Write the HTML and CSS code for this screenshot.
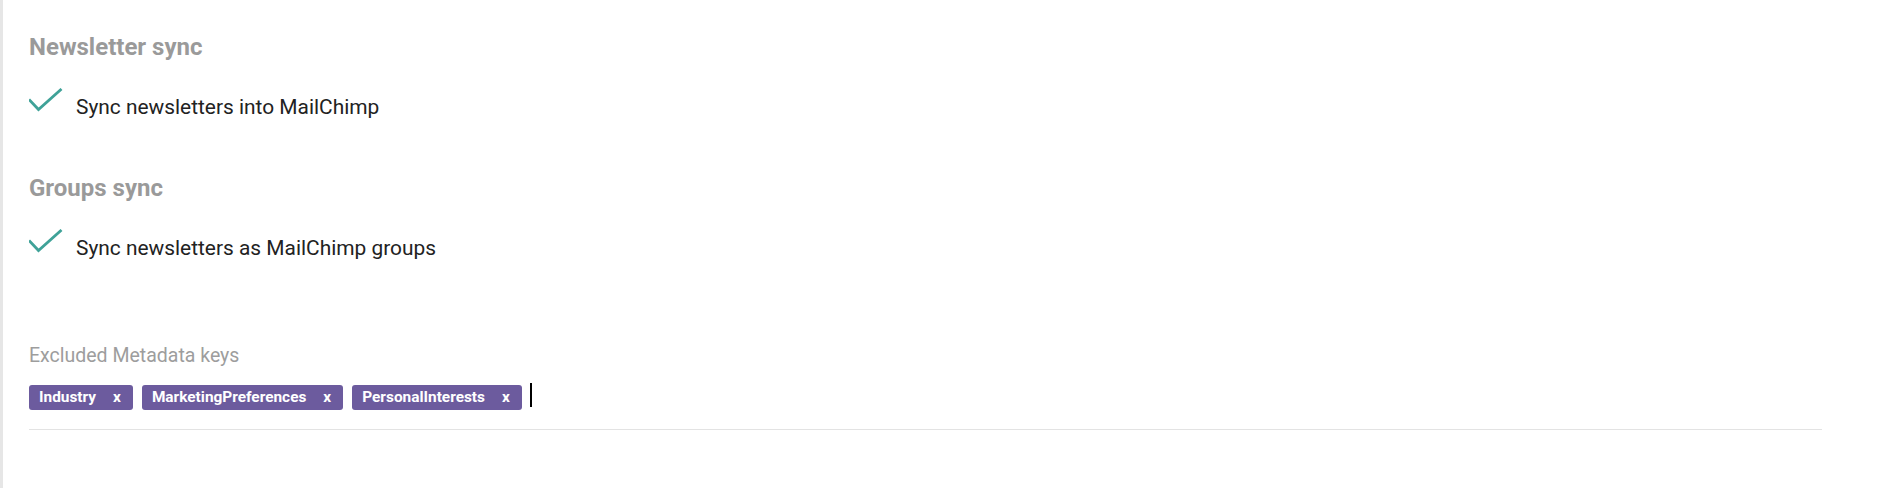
FILE: index.html
```html
<!DOCTYPE html>
<html lang="en">
<head>
  <meta charset="UTF-8">
  <meta name="viewport" content="width=device-width, initial-scale=1.0">
  <title>MailChimp settings</title>
  <link rel="stylesheet" href="styles.css">
</head>
<body>
  <div class="panel">
    <div class="section">
      <h2>Newsletter sync</h2>
      <div class="option">
        <svg class="check" viewBox="0 0 34 25" width="34" height="25">
          <polyline points="0,11.5 9.5,21.5 32.5,1" />
        </svg>
        <span class="option-label">Sync newsletters into MailChimp</span>
      </div>
    </div>

    <div class="section section-next">
      <h2>Groups sync</h2>
      <div class="option">
        <svg class="check" viewBox="0 0 34 25" width="34" height="25">
          <polyline points="0,11.5 9.5,21.5 32.5,1" />
        </svg>
        <span class="option-label">Sync newsletters as MailChimp groups</span>
      </div>
    </div>

    <div class="field">
      <label class="field-label">Excluded Metadata keys</label>
      <div class="tags">
        <span class="tag">Industry<span class="tag-x">x</span></span>
        <span class="tag">MarketingPreferences<span class="tag-x">x</span></span>
        <span class="tag">PersonalInterests<span class="tag-x">x</span></span>
        <span class="cursor"></span>
      </div>
    </div>
  </div>
</body>
</html>
```

FILE: styles.css
```css
body {
  margin: 0;
  padding: 0;
  font-family: Roboto, 'Liberation Sans', Arial, sans-serif;
  background: #fff;
  color: #222;
}

.panel {
  border-left: 3px solid #e6e6e6;
  min-height: 100vh;
  box-sizing: border-box;
  padding: 33px 0 0 26px;
}

h2 {
  margin: 0;
  font-size: 24px;
  line-height: 28px;
  font-weight: 700;
  color: #9a9a9a;
}

.section-next {
  margin-top: 55px;
}

.option {
  display: flex;
  align-items: flex-start;
  margin-top: 27px;
}

.check {
  display: block;
  flex-shrink: 0;
}

.check polyline {
  fill: none;
  stroke: #3fa298;
  stroke-width: 2.8;
}

.option-label {
  margin-left: 13px;
  margin-top: 7px;
  font-size: 20.9px;
  line-height: 24px;
  color: #222;
}

.field {
  margin-top: 84px;
  width: 1793px;
  padding-bottom: 19px;
  border-bottom: 1px solid #e3e3e3;
}

.field-label {
  display: block;
  font-size: 19.5px;
  line-height: 23px;
  color: #9d9d9d;
}

.tags {
  display: flex;
  align-items: flex-start;
  gap: 9px;
  margin-top: 18px;
}

.tag {
  display: inline-flex;
  height: 25px;
  line-height: 25px;
  padding: 0 12px 0 10px;
  border-radius: 3px;
  background: #6c5b9e;
  color: #fff;
  font-size: 15.4px;
  font-weight: 700;
}

.tag-x {
  margin-left: 17px;
}

.cursor {
  width: 2px;
  height: 24px;
  margin-top: -2px;
  margin-left: -1px;
  background: #000;
}
```
